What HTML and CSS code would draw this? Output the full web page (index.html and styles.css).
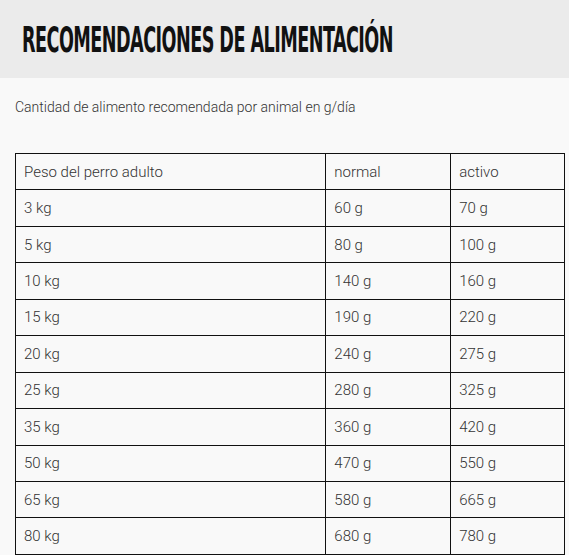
FILE: index.html
```html
<!DOCTYPE html>
<html lang="es">
<head>
<meta charset="utf-8">
<title>Recomendaciones de alimentación</title>
<link rel="stylesheet" href="styles.css">
</head>
<body>
<header class="banner">
  <h1 class="title">RECOMENDACIONES DE ALIMENTACIÓN</h1>
</header>
<main class="content">
  <p class="intro">Cantidad de alimento recomendada por animal en g/día</p>
  <table class="feed">
    <colgroup>
      <col class="c1"><col class="c2"><col class="c3">
    </colgroup>
    <tr><td>Peso del perro adulto</td><td>normal</td><td>activo</td></tr>
    <tr><td>3 kg</td><td>60 g</td><td>70 g</td></tr>
    <tr><td>5 kg</td><td>80 g</td><td>100 g</td></tr>
    <tr><td>10 kg</td><td>140 g</td><td>160 g</td></tr>
    <tr><td>15 kg</td><td>190 g</td><td>220 g</td></tr>
    <tr><td>20 kg</td><td>240 g</td><td>275 g</td></tr>
    <tr><td>25 kg</td><td>280 g</td><td>325 g</td></tr>
    <tr><td>35 kg</td><td>360 g</td><td>420 g</td></tr>
    <tr><td>50 kg</td><td>470 g</td><td>550 g</td></tr>
    <tr><td>65 kg</td><td>580 g</td><td>665 g</td></tr>
    <tr><td>80 kg</td><td>680 g</td><td>780 g</td></tr>
  </table>
</main>
</body>
</html>
```
FILE: styles.css
```css
html, body {
  margin: 0;
  padding: 0;
  background: #f9f9f9;
}
body {
  font-family: Roboto, "Liberation Sans", sans-serif;
  font-weight: 300;
  color: #333;
  font-size: 14px;
}
.banner {
  background: #ebebeb;
  height: 78px;
  display: flex;
  align-items: center;
  padding-left: 22px;
  box-sizing: border-box;
}
.title {
  margin: 0;
  font-family: "DejaVu Sans Condensed", "DejaVu Sans", sans-serif;
  font-weight: bold;
  font-size: 35px;
  line-height: 1;
  color: #111;
  letter-spacing: -1px;
  transform: scaleX(0.56);
  transform-origin: left center;
  white-space: nowrap;
  margin-top: 2px;
}
.content {
  padding: 0 4px 0 15px;
}
.intro {
  margin: 0;
  padding-top: 19px;
  font-size: 14px;
  line-height: 20px;
  height: 56px;
}
.feed {
  border-collapse: collapse;
  width: 550px;
}
.c1 { width: 311px; }
.c2 { width: 125px; }
.c3 { width: 114px; }
.feed td {
  border: 1px solid #111;
  padding: 0 8px;
  height: 35.45px;
  font-size: 15px;
  line-height: 20px;
  vertical-align: middle;
}
```
